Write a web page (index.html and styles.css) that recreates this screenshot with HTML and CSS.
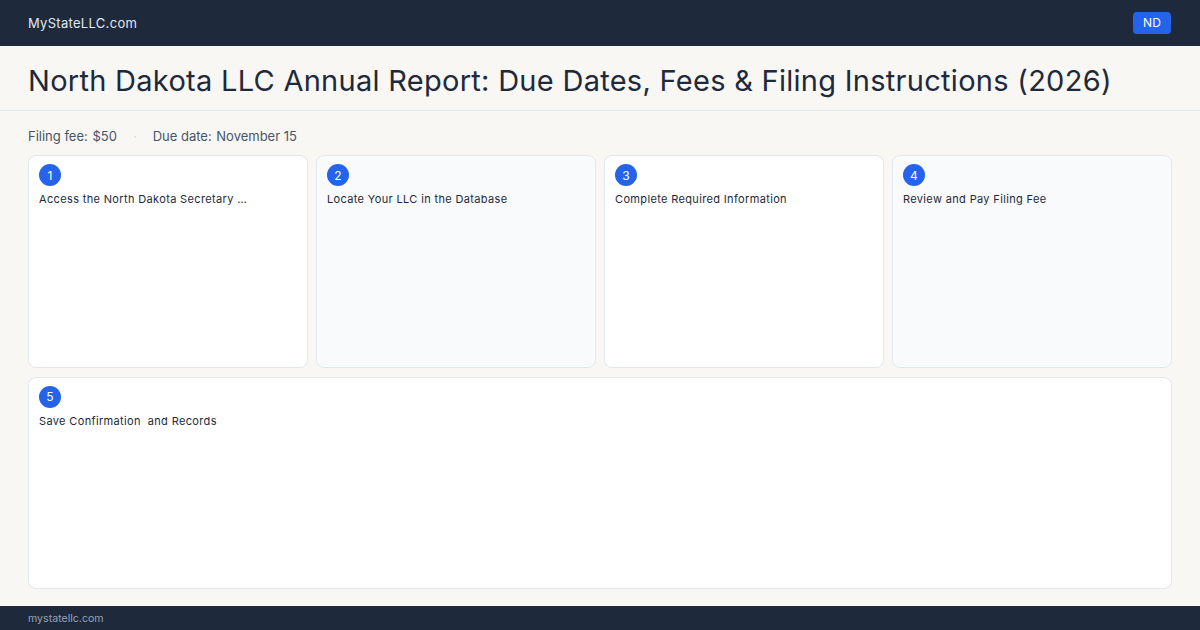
FILE: index.html
```html
<!DOCTYPE html>
<html lang="en">
<head>
    <meta charset="UTF-8">
    <meta name="viewport" content="width=device-width, initial-scale=1.0">
    <title>North Dakota LLC Annual Report</title>

    <link rel="stylesheet" href="styles.css">
</head>
<body>

    <!-- Top bar -->
    <header class="topbar">
        <span class="brand">MyStateLLC.com</span>
        <span class="state-badge">ND</span>
    </header>

    <!-- Page title -->
    <div class="title-bar">
        <h1>North Dakota LLC Annual Report: Due Dates, Fees &amp; Filing Instructions (2026)</h1>
    </div>

    <main class="content">
        <div class="meta">
            <span class="meta-item"><span class="label">Filing fee:</span> <span class="value">$50</span></span>
            <span class="sep">·</span>
            <span class="meta-item"><span class="label">Due date:</span> <span class="value">November 15</span></span>
        </div>

        <!-- Steps -->
        <div class="steps">
            <div class="step">
                <span class="num">1</span>
                <p>Access the North Dakota Secretary …</p>
            </div>
            <div class="step alt">
                <span class="num">2</span>
                <p>Locate Your LLC in the Database</p>
            </div>
            <div class="step">
                <span class="num">3</span>
                <p>Complete Required Information</p>
            </div>
            <div class="step alt">
                <span class="num">4</span>
                <p>Review and Pay Filing Fee</p>
            </div>
            <div class="step wide">
                <span class="num">5</span>
                <p>Save Confirmation&nbsp; and Records</p>
            </div>
        </div>
    </main>

    <footer class="footer">mystatellc.com</footer>
</body>
</html>
```

FILE: styles.css
```css
* {
    box-sizing: border-box;
}

html, body {
    margin: 0;
    height: 630px;
}

body {
    display: flex;
    flex-direction: column;
    background-color: #f8f7f4;
    color: #1e293b;
    font-family: Inter, "Liberation Sans", sans-serif;
    overflow: hidden;
}

/* Top bar */
.topbar {
    height: 46px;
    flex: none;
    display: flex;
    align-items: center;
    justify-content: space-between;
    padding: 0 29px 0 28px;
    background-color: #1e293b;
}

.brand {
    color: #e2e8f0;
    font-size: 13px;
    letter-spacing: 0.3px;
}

.state-badge {
    background-color: #2563eb;
    color: #ffffff;
    font-size: 12px;
    line-height: 22px;
    padding: 0 10px;
    border-radius: 4px;
    letter-spacing: 0.2px;
}

/* Title */
.title-bar {
    height: 65px;
    flex: none;
    display: flex;
    align-items: center;
    padding: 4px 28px 0;
    border-bottom: 1px solid #e2e8f0;
}

.title-bar h1 {
    margin: 0;
    font-size: 29px;
    font-weight: 400;
    color: #1e293b;
    letter-spacing: 0.28px;
}

/* Main area */
.content {
    flex: 1;
    display: flex;
    flex-direction: column;
    padding: 16px 28px 17px;
    min-height: 0;
}

.meta {
    display: flex;
    align-items: center;
    gap: 16px;
    height: 18px;
    font-size: 13px;
    color: #475569;
    margin-bottom: 10px;
}

.meta .value {
    margin-left: 1px;
}

.meta .sep {
    color: #d6d9de;
}

.steps {
    flex: 1;
    display: grid;
    grid-template-columns: repeat(4, 1fr);
    grid-template-rows: 1fr 1fr;
    gap: 9px 8px;
}

.step {
    background-color: #ffffff;
    border: 1px solid #e2e8f0;
    border-radius: 8px;
    padding: 8px 10px;
}

.step.alt {
    background-color: #f8fafc;
}

.step.wide {
    grid-column: 1 / -1;
}

.step .num {
    display: flex;
    align-items: center;
    justify-content: center;
    width: 22px;
    height: 22px;
    border-radius: 50%;
    background-color: #2563eb;
    color: #ffffff;
    font-size: 12px;
}

.step p {
    margin: 6px 0 0;
    font-size: 11px;
    line-height: 14px;
    color: #1e293b;
    letter-spacing: 0.35px;
}

/* Footer */
.footer {
    height: 24px;
    flex: none;
    display: flex;
    align-items: center;
    padding: 0 28px;
    background-color: #1e293b;
    color: #94a3b8;
    font-size: 10.6px;
}
```
